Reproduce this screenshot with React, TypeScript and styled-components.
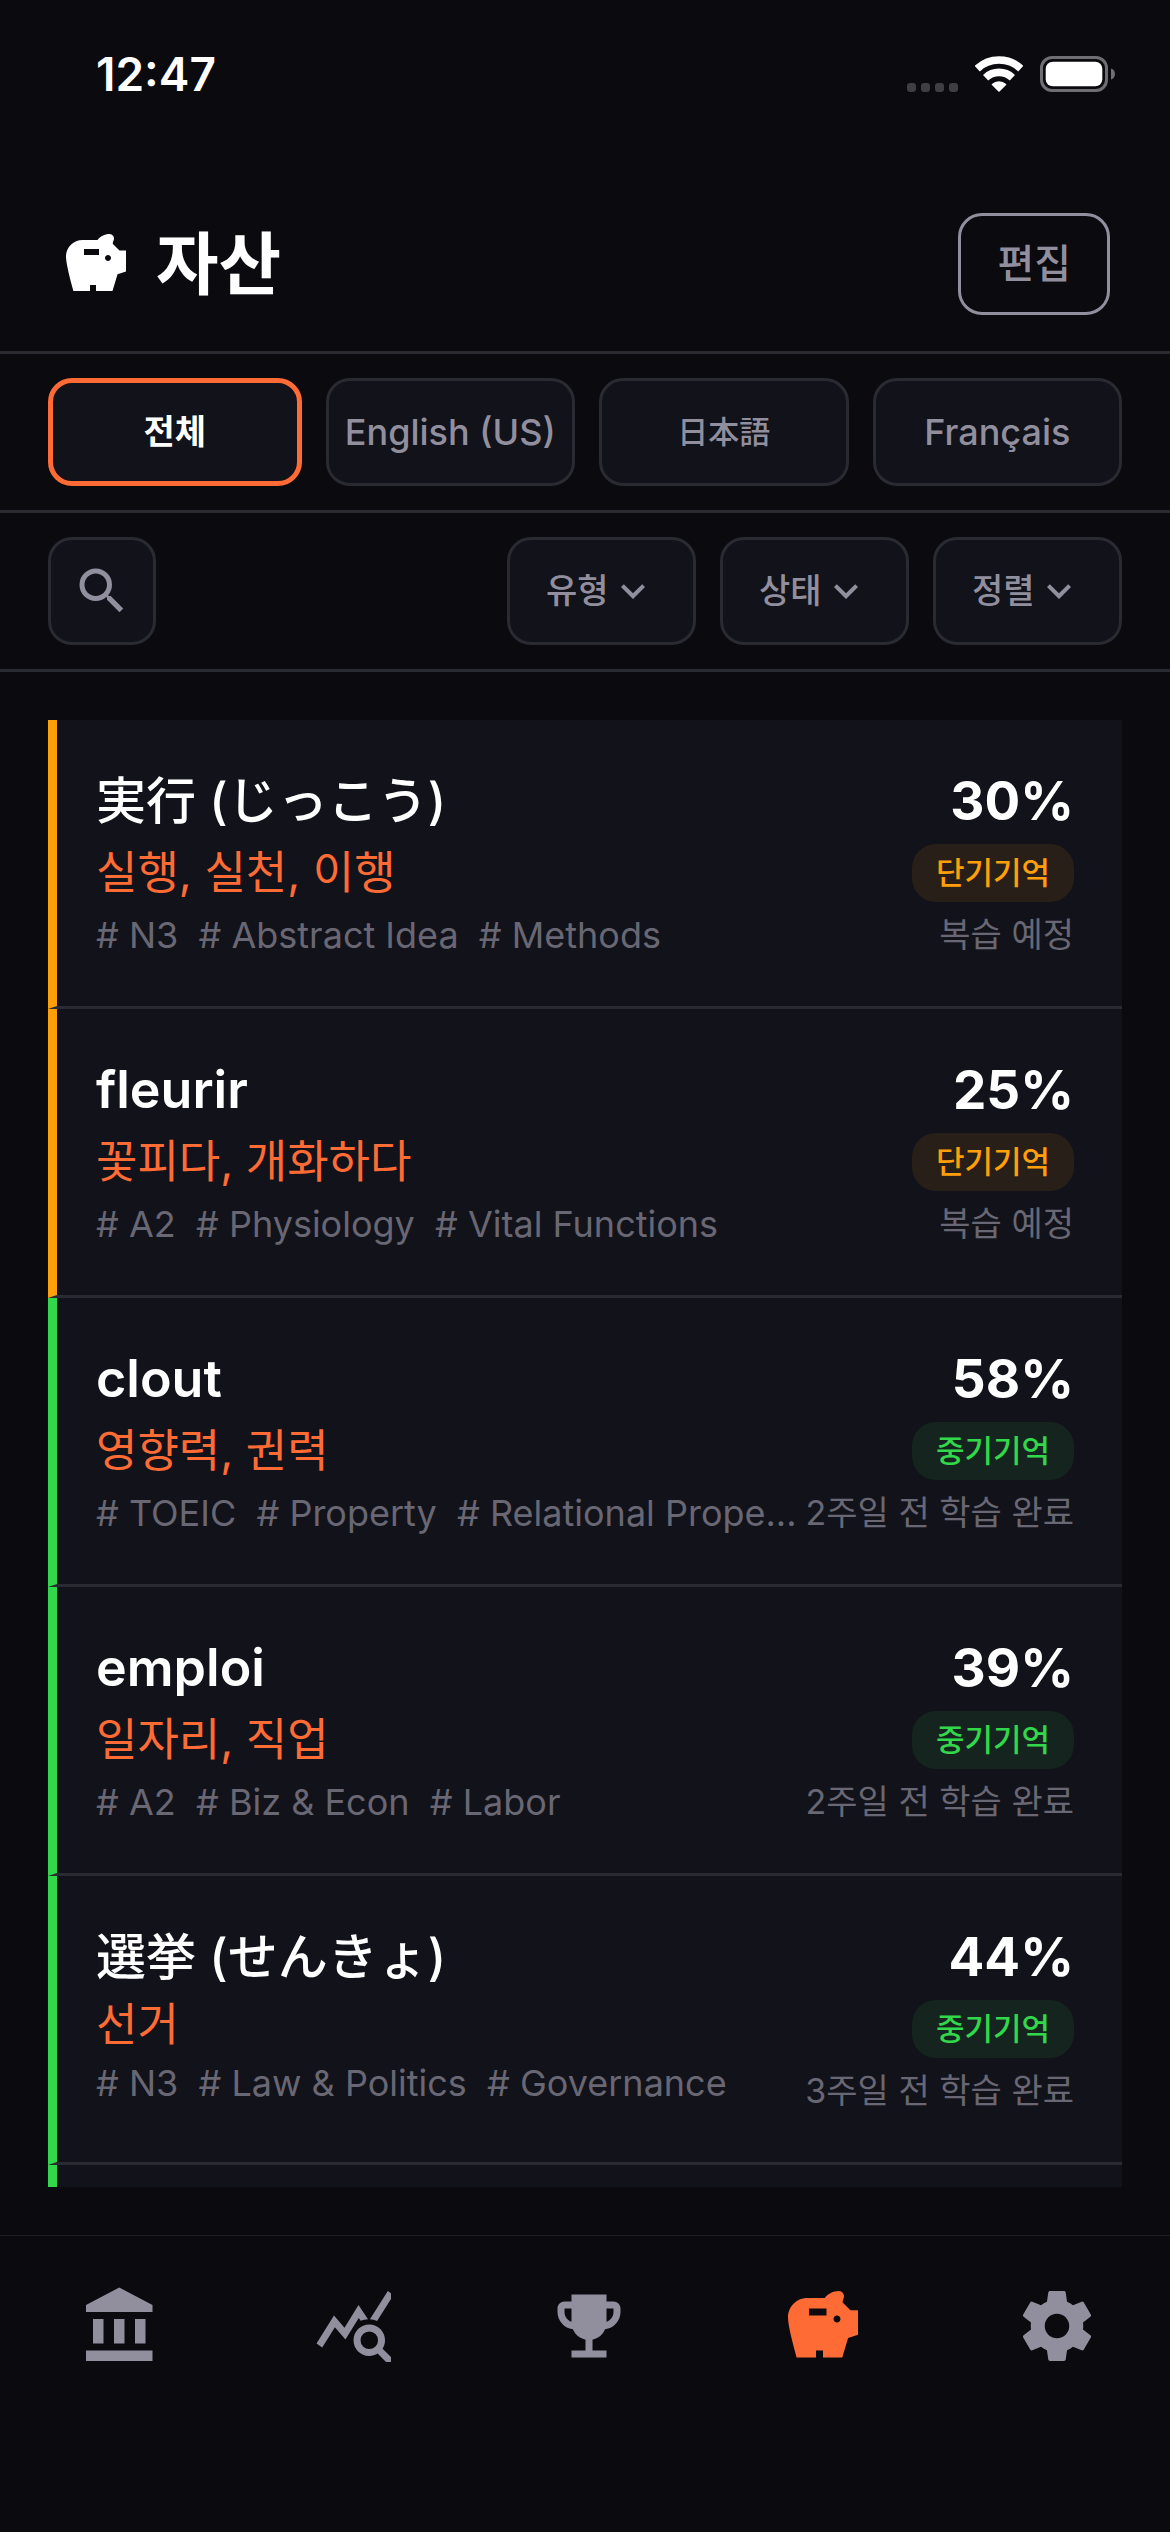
import React from 'react';
import styled, { createGlobalStyle } from 'styled-components';
import { MdEmojiEvents, MdExpandMore, MdSavings, MdSearch } from 'react-icons/md';

const color = {
  background: '#0a0a0f',
  surface: '#12121a',
  line: '#2a2a32',
  text: '#ffffff',
  muted: '#918f9e',
  faint: '#686773',
  accent: '#ff6b35',
  short: '#ff9f0a',
  medium: '#32d74b',
};

const sans = `Inter, 'Noto Sans CJK KR', 'Noto Sans CJK JP', sans-serif`;
const japanese = `Inter, 'Noto Sans CJK JP', sans-serif`;

const GlobalStyle = createGlobalStyle`
  *, *::before, *::after { box-sizing: border-box; }
  body { margin: 0; background: ${color.background}; }
  button, select { font-family: inherit; margin: 0; }
`;

const Screen = styled.div`
  display: flex;
  flex-direction: column;
  height: 100vh;
  overflow: hidden;
  background: ${color.background};
  color: ${color.text};
  font-family: ${sans};
`;

const StatusBar = styled.div`
  display: flex;
  align-items: center;
  justify-content: space-between;
  height: 148px;
  flex-shrink: 0;
  padding: 0 55px 0 96px;
`;

const Clock = styled.time`
  font-size: 46px;
  line-height: 56px;
  font-weight: 600;
`;

const StatusIcons = styled.div`
  display: flex;
  align-items: center;
  gap: 17px;
`;

const Header = styled.header`
  display: flex;
  align-items: center;
  justify-content: space-between;
  flex-shrink: 0;
  padding: 65px 60px 36px;
  border-bottom: 3px solid ${color.line};
`;

const Title = styled.h1`
  display: flex;
  align-items: center;
  gap: 24px;
  margin: 0;
  font-size: 68px;
  line-height: 84px;
  font-weight: 700;
`;

const EditButton = styled.button`
  height: 102px;
  padding: 0 36px;
  border: 3px solid ${color.muted};
  border-radius: 24px;
  background: transparent;
  color: ${color.muted};
  font-size: 40px;
  line-height: 48px;
  font-weight: 500;
`;

const Bar = styled.div`
  display: flex;
  align-items: center;
  gap: 24px;
  flex-shrink: 0;
  padding: 24px 48px;
  border-bottom: 3px solid ${color.line};
`;

const LanguageChip = styled.button<{ $active?: boolean }>`
  flex: 1 1 0;
  min-width: 0;
  height: 108px;
  padding: 0;
  border: ${(p) => (p.$active ? `5px solid ${color.accent}` : `3px solid ${color.line}`)};
  border-radius: 24px;
  background: ${color.surface};
  color: ${(p) => (p.$active ? color.text : color.muted)};
  font-size: 36px;
  line-height: 48px;
  font-weight: ${(p) => (p.$active ? 700 : 500)};
  white-space: nowrap;

  &:lang(ko) {
    font-size: 34px;
  }

  &:lang(ja) {
    font-family: ${japanese};
    font-size: 31px;
  }
`;

const SearchButton = styled.button`
  display: flex;
  align-items: center;
  justify-content: center;
  width: 108px;
  height: 108px;
  margin-right: auto;
  padding: 0;
  border: 3px solid ${color.line};
  border-radius: 24px;
  background: ${color.surface};
  color: ${color.muted};
`;

const Filter = styled.label`
  display: flex;
  align-items: center;
  justify-content: center;
  height: 108px;
  padding: 0 36px;
  border: 3px solid ${color.line};
  border-radius: 24px;
  background: ${color.surface};
  color: ${color.muted};
`;

const FilterSelect = styled.select`
  width: 63px;
  padding: 0;
  border: 0;
  appearance: none;
  background: transparent;
  color: inherit;
  font-size: 34px;
  line-height: 48px;
  font-weight: 500;
`;

const ListArea = styled.main`
  display: flex;
  flex-direction: column;
  flex: 1 1 0;
  min-height: 0;
  padding: 48px;
`;

const List = styled.ul`
  flex: 1 1 0;
  min-height: 0;
  margin: 0;
  padding: 0;
  overflow: hidden;
  list-style: none;
`;

const Row = styled.li<{ $tone: string }>`
  display: flex;
  gap: 4px;
  padding: 48px 48px 48px 39px;
  border-left: 9px solid ${(p) => p.$tone};
  border-bottom: 3px solid ${color.line};
  background: ${color.surface};
`;

const Entry = styled.div`
  display: flex;
  flex-direction: column;
  flex: 1 1 0;
  min-width: 0;
  gap: 10px;
`;

const Word = styled.h2`
  margin: 0;
  font-size: 52px;
  line-height: 66px;
  font-weight: 600;
  white-space: nowrap;

  &:lang(ja) {
    font-family: ${japanese};
    font-size: 50px;
    font-weight: 500;
  }
`;

const Meaning = styled.p<{ $tight?: boolean }>`
  margin: 0;
  color: ${color.accent};
  font-size: 45px;
  line-height: ${(p) => (p.$tight ? 50 : 58)}px;
  white-space: nowrap;
`;

const Tags = styled.p`
  margin: 0;
  color: ${color.faint};
  font-size: 36px;
  line-height: 46px;
  white-space: pre;
`;

const Progress = styled.div`
  display: flex;
  flex-direction: column;
  align-items: flex-end;
  flex-shrink: 0;
  gap: 10px;
`;

const Percent = styled.strong`
  font-size: 53px;
  line-height: 66px;
  font-weight: 700;
`;

const Badge = styled.span<{ $tone: string }>`
  padding: 0 24px;
  border-radius: 24px;
  background: ${(p) => p.$tone}18;
  color: ${(p) => p.$tone};
  font-size: 31px;
  line-height: 58px;
  font-weight: 500;
`;

const Schedule = styled.span`
  color: ${color.faint};
  font-size: 34px;
  line-height: 46px;
`;

const TabBar = styled.nav`
  display: flex;
  align-items: flex-start;
  flex-shrink: 0;
  height: 297px;
  padding-top: 48px;
  border-top: 1px solid #1c1c22;
`;

const Tab = styled.a<{ $active?: boolean }>`
  display: flex;
  justify-content: center;
  flex: 1 1 0;
  padding-left: 8px;
  color: ${(p) => (p.$active ? color.accent : color.muted)};
`;

type Item = {
  word: string;
  lang: string;
  meaning: string;
  tags: string[];
  percent: number;
  stage: 'short' | 'medium';
  schedule: string;
};

const stageLabel = { short: '단기기억', medium: '중기기억' };

const items: Item[] = [
  { word: '実行 (じっこう)', lang: 'ja', meaning: '실행, 실천, 이행', tags: ['N3', 'Abstract Idea', 'Methods'], percent: 30, stage: 'short', schedule: '복습 예정' },
  { word: 'fleurir', lang: 'fr', meaning: '꽃피다, 개화하다', tags: ['A2', 'Physiology', 'Vital Functions'], percent: 25, stage: 'short', schedule: '복습 예정' },
  { word: 'clout', lang: 'en', meaning: '영향력, 권력', tags: ['TOEIC', 'Property', 'Relational Prope...'], percent: 58, stage: 'medium', schedule: '2주일 전 학습 완료' },
  { word: 'emploi', lang: 'fr', meaning: '일자리, 직업', tags: ['A2', 'Biz & Econ', 'Labor'], percent: 39, stage: 'medium', schedule: '2주일 전 학습 완료' },
  { word: '選挙 (せんきょ)', lang: 'ja', meaning: '선거', tags: ['N3', 'Law & Politics', 'Governance'], percent: 44, stage: 'medium', schedule: '3주일 전 학습 완료' },
];

const languages = [
  { label: '전체', lang: 'ko' },
  { label: 'English (US)', lang: 'en' },
  { label: '日本語', lang: 'ja' },
  { label: 'Français', lang: 'fr' },
];

const filters = ['유형', '상태', '정렬'];

function SignalDots() {
  return (
    <svg width="51" height="36" viewBox="0 0 51 36" fill="#3e3e43" aria-hidden="true">
      {[0, 14, 28, 42].map((x) => (
        <rect key={x} x={x} y="27" width="9" height="9" rx="3" />
      ))}
    </svg>
  );
}

function Wifi() {
  return (
    <svg width="48" height="36" viewBox="0 0 48 36" aria-hidden="true">
      <g fill="none" stroke="#fff" strokeWidth="7.6">
        <path d="M2.2 12.6A32 32 0 0 1 45.800 12.6" />
        <path d="M10.6 21.7A19.600 19.600 0 0 1 37.400 21.7" />
      </g>
      <path d="M24 35L17.500 28.500A9.500 9.500 0 0 1 30.500 28.500Z" fill="#fff" stroke="#fff" strokeWidth="1.6" strokeLinejoin="round" />
    </svg>
  );
}

function Battery() {
  return (
    <svg width="75" height="36" viewBox="0 0 75 36" aria-hidden="true">
      <rect x="1.5" y="1.5" width="65" height="33" rx="10.5" fill="none" stroke="#6f6f73" strokeWidth="3" />
      <rect x="5.700" y="5.700" width="56.600" height="24.600" rx="7" fill="#fff" />
      <path d="M71 12.500c2.600.8 4 2.900 4 5.500s-1.400 4.700-4 5.500z" fill="#6f6f73" />
    </svg>
  );
}

function BankIcon({ size }: { size: number }) {
  return (
    <svg width={size} height={size} viewBox="0 0 24 24" fill="currentColor" aria-hidden="true">
      <path d="M4 10v7h3v-7H4zm6 0v7h3v-7h-3zM2 22h19v-3H2v3zm14-12v7h3v-7h-3zm-4.500-9L2 6v2h19V6l-9.500-5z" />
    </svg>
  );
}

function StatsIcon({ size }: { size: number }) {
  return (
    <svg width={size} height={size} viewBox="0 0 24 24" fill="currentColor" aria-hidden="true">
      <svg width="22.3" height="22.3">
        <path d="M19.88 18.47c.44-.7.7-1.51.7-2.39 0-2.49-2.01-4.5-4.5-4.5s-4.5 2.01-4.5 4.5 2.01 4.5 4.49 4.5c.88 0 1.7-.26 2.39-.7L21.58 23 23 21.58l-3.12-3.11zm-3.8.11a2.5 2.5 0 0 1 0-5 2.5 2.5 0 0 1 0 5zm-.36-8.5c-.74.02-1.45.18-2.1.45l-.55-.83-3.8 6.18-3.01-3.52-3.63 5.81L1 17l5-8 3 3.5L13 6l2.72 4.08zm2.59.5c-.64-.28-1.33-.45-2.05-.49L21.38 2 23 3.18l-4.69 7.4z" />
      </svg>
    </svg>
  );
}

function GearIcon({ size }: { size: number }) {
  return (
    <svg width={size} height={size} viewBox="0 0 24 24" fill="currentColor" aria-hidden="true">
      <path d="M19.43 12.98c.04-.32.07-.64.07-.98s-.03-.66-.07-.98l2.11-1.65c.19-.15.24-.42.12-.64l-2-3.46c-.12-.22-.39-.3-.61-.22l-2.49 1c-.52-.4-1.08-.73-1.69-.98l-.38-2.65C14.46 2.18 14.25 2 14 2h-4c-.25 0-.46.18-.49.42l-.38 2.65c-.61.25-1.17.59-1.69.98l-2.49-1c-.23-.09-.49 0-.61.22l-2 3.46c-.13.22-.07.49.12.64l2.11 1.65c-.04.32-.07.65-.07.98s.03.66.07.98l-2.11 1.65c-.19.15-.24.42-.12.64l2 3.46c.12.22.39.3.61.22l2.49-1c.52.4 1.08.73 1.69.98l.38 2.65c.03.24.24.42.49.42h4c.25 0 .46-.18.49-.42l.38-2.65c.61-.25 1.17-.59 1.69-.98l2.49 1c.23.09.49 0 .61-.22l2-3.46c.12-.22.07-.49-.12-.64l-2.11-1.65zM12 15.5c-1.93 0-3.5-1.57-3.5-3.5s1.57-3.5 3.5-3.5 3.5 1.57 3.5 3.5-1.57 3.5-3.5 3.5z" />
    </svg>
  );
}

const tabs = [
  { label: '홈', icon: BankIcon },
  { label: '통계', icon: StatsIcon },
  { label: '업적', icon: MdEmojiEvents },
  { label: '자산', icon: MdSavings },
  { label: '설정', icon: GearIcon },
];

export default function App() {
  return (
    <Screen lang="ko">
      <GlobalStyle />
      <StatusBar>
        <Clock>12:47</Clock>
        <StatusIcons>
          <SignalDots />
          <Wifi />
          <Battery />
        </StatusIcons>
      </StatusBar>

      <Header>
        <Title>
          <MdSavings size={72} aria-hidden="true" />
          자산
        </Title>
        <EditButton type="button">편집</EditButton>
      </Header>

      <Bar>
        {languages.map((language, index) => (
          <LanguageChip key={language.label} type="button" lang={language.lang} $active={index === 0} aria-pressed={index === 0}>
            {language.label}
          </LanguageChip>
        ))}
      </Bar>

      <Bar>
        <SearchButton type="button" aria-label="검색">
          <MdSearch size={60} />
        </SearchButton>
        {filters.map((name) => (
          <Filter key={name}>
            <FilterSelect aria-label={name} defaultValue={name}>
              <option>{name}</option>
            </FilterSelect>
            <MdExpandMore size={48} aria-hidden="true" />
          </Filter>
        ))}
      </Bar>

      <ListArea>
        <List>
          {items.map((item) => (
            <Row key={item.word} $tone={color[item.stage]}>
              <Entry>
                <Word lang={item.lang}>{item.word}</Word>
                <Meaning $tight={!item.meaning.includes(',')}>{item.meaning}</Meaning>
                <Tags>{item.tags.map((tag) => `# ${tag}`).join('  ')}</Tags>
              </Entry>
              <Progress>
                <Percent>{item.percent}%</Percent>
                <Badge $tone={color[item.stage]}>{stageLabel[item.stage]}</Badge>
                <Schedule>{item.schedule}</Schedule>
              </Progress>
            </Row>
          ))}
          <Row $tone={color.medium} aria-hidden="true" />
        </List>
      </ListArea>

      <TabBar>
        {tabs.map(({ label, icon: Icon }) => (
          <Tab key={label} href="#" aria-label={label} $active={label === '자산'}>
            <Icon size={84} />
          </Tab>
        ))}
      </TabBar>
    </Screen>
  );
}
